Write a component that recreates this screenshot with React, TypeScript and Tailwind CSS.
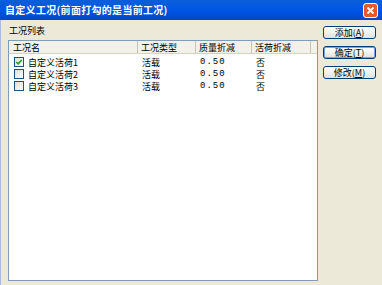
import React from "react";

const font = { fontFamily: '"Noto Sans CJK SC", "Liberation Sans", sans-serif' };

function Btn({ label, def }: { label: React.ReactNode; def?: boolean }) {
  return (
    <div
      className={
        "h-[13px] w-[53px] rounded-[3px] border border-[#003c74] bg-gradient-to-b from-[#ffffff] to-[#e3e3db] flex items-center justify-center text-[9px] leading-none text-black " +
        (def ? "shadow-[inset_0_0_0_1px_#7ca3e8]" : "")
      }
    >
      {label}
    </div>
  );
}

function Check({ checked }: { checked?: boolean }) {
  return (
    <div className="w-[10px] h-[10px] border border-[#1c5180] bg-gradient-to-br from-[#dcdcd7] to-[#ffffff] flex items-center justify-center">
      {checked && (
        <svg width="8" height="8" viewBox="0 0 8 8">
          <path d="M1.3 4 L3.2 5.8 L6.7 2" stroke="#21a121" strokeWidth="1.6" fill="none" />
        </svg>
      )}
    </div>
  );
}

const rows = [
  { name: "自定义活荷1", checked: true },
  { name: "自定义活荷2", checked: false },
  { name: "自定义活荷3", checked: false },
];

export default function App() {
  return (
    <div className="w-[382px] h-[285px] bg-[#ece9d8] flex flex-col overflow-hidden" style={font}>
      <div className="h-[20px] bg-gradient-to-b from-[#0a5fd8] via-[#0055e5] to-[#0046c8] flex items-center pl-[5px] pr-[4px]">
        <span className="text-white font-bold text-[10px] leading-none tracking-[0.3px]">
          自定义工况(前面打勾的是当前工况)
        </span>
        <div className="ml-auto w-[15px] h-[15px] rounded-[3px] border border-white bg-[#e35a2d] flex items-center justify-center">
          <svg width="9" height="9" viewBox="0 0 9 9">
            <path d="M1.5 1.5 L7.5 7.5 M7.5 1.5 L1.5 7.5" stroke="white" strokeWidth="1.8" />
          </svg>
        </div>
      </div>
      <div className="flex-1 flex border-l border-[#a9bde2]">
        <div className="flex flex-col pl-[7px] w-[317px]">
          <div className="h-[20px] flex items-center pl-[1px] text-[9px] leading-none text-black">工况列表</div>
          <div className="h-[241px] border border-[#7f9db9] bg-white flex flex-col">
            <div className="h-[13px] flex bg-[#f2f1ea] border-b border-[#d6d2c2] text-[9px] leading-none text-black">
              <div className="w-[129px] border-r border-[#c7c5b2] flex items-center pl-[4px]">工况名</div>
              <div className="w-[58px] border-r border-[#c7c5b2] flex items-center pl-[3px]">工况类型</div>
              <div className="w-[56px] border-r border-[#c7c5b2] flex items-center pl-[3px]">质量折减</div>
              <div className="w-[59px] border-r border-[#c7c5b2] flex items-center pl-[3px]">活荷折减</div>
            </div>
            <div className="pt-[2px] flex flex-col">
              {rows.map((r) => (
                <div key={r.name} className="h-[12px] flex items-center text-[9px] leading-none text-black">
                  <div className="w-[129px] flex items-center pl-[5px] gap-[4px]">
                    <Check checked={r.checked} />
                    <span>{r.name}</span>
                  </div>
                  <div className="w-[58px] pl-[4px]">活载</div>
                  <div className="w-[56px] pl-[4px] tracking-[1px]" style={{ fontFamily: '"Liberation Mono", monospace' }}>0.50</div>
                  <div className="w-[59px] pl-[4px]">否</div>
                </div>
              ))}
            </div>
          </div>
        </div>
        <div className="flex flex-col pl-[5px] pt-[6px] gap-[7px]">
          <Btn label={<span>添加(<u>A</u>)</span>} />
          <Btn label={<span>确定(<u>T</u>)</span>} def />
          <Btn label={<span>修改(<u>M</u>)</span>} />
        </div>
      </div>
    </div>
  );
}
